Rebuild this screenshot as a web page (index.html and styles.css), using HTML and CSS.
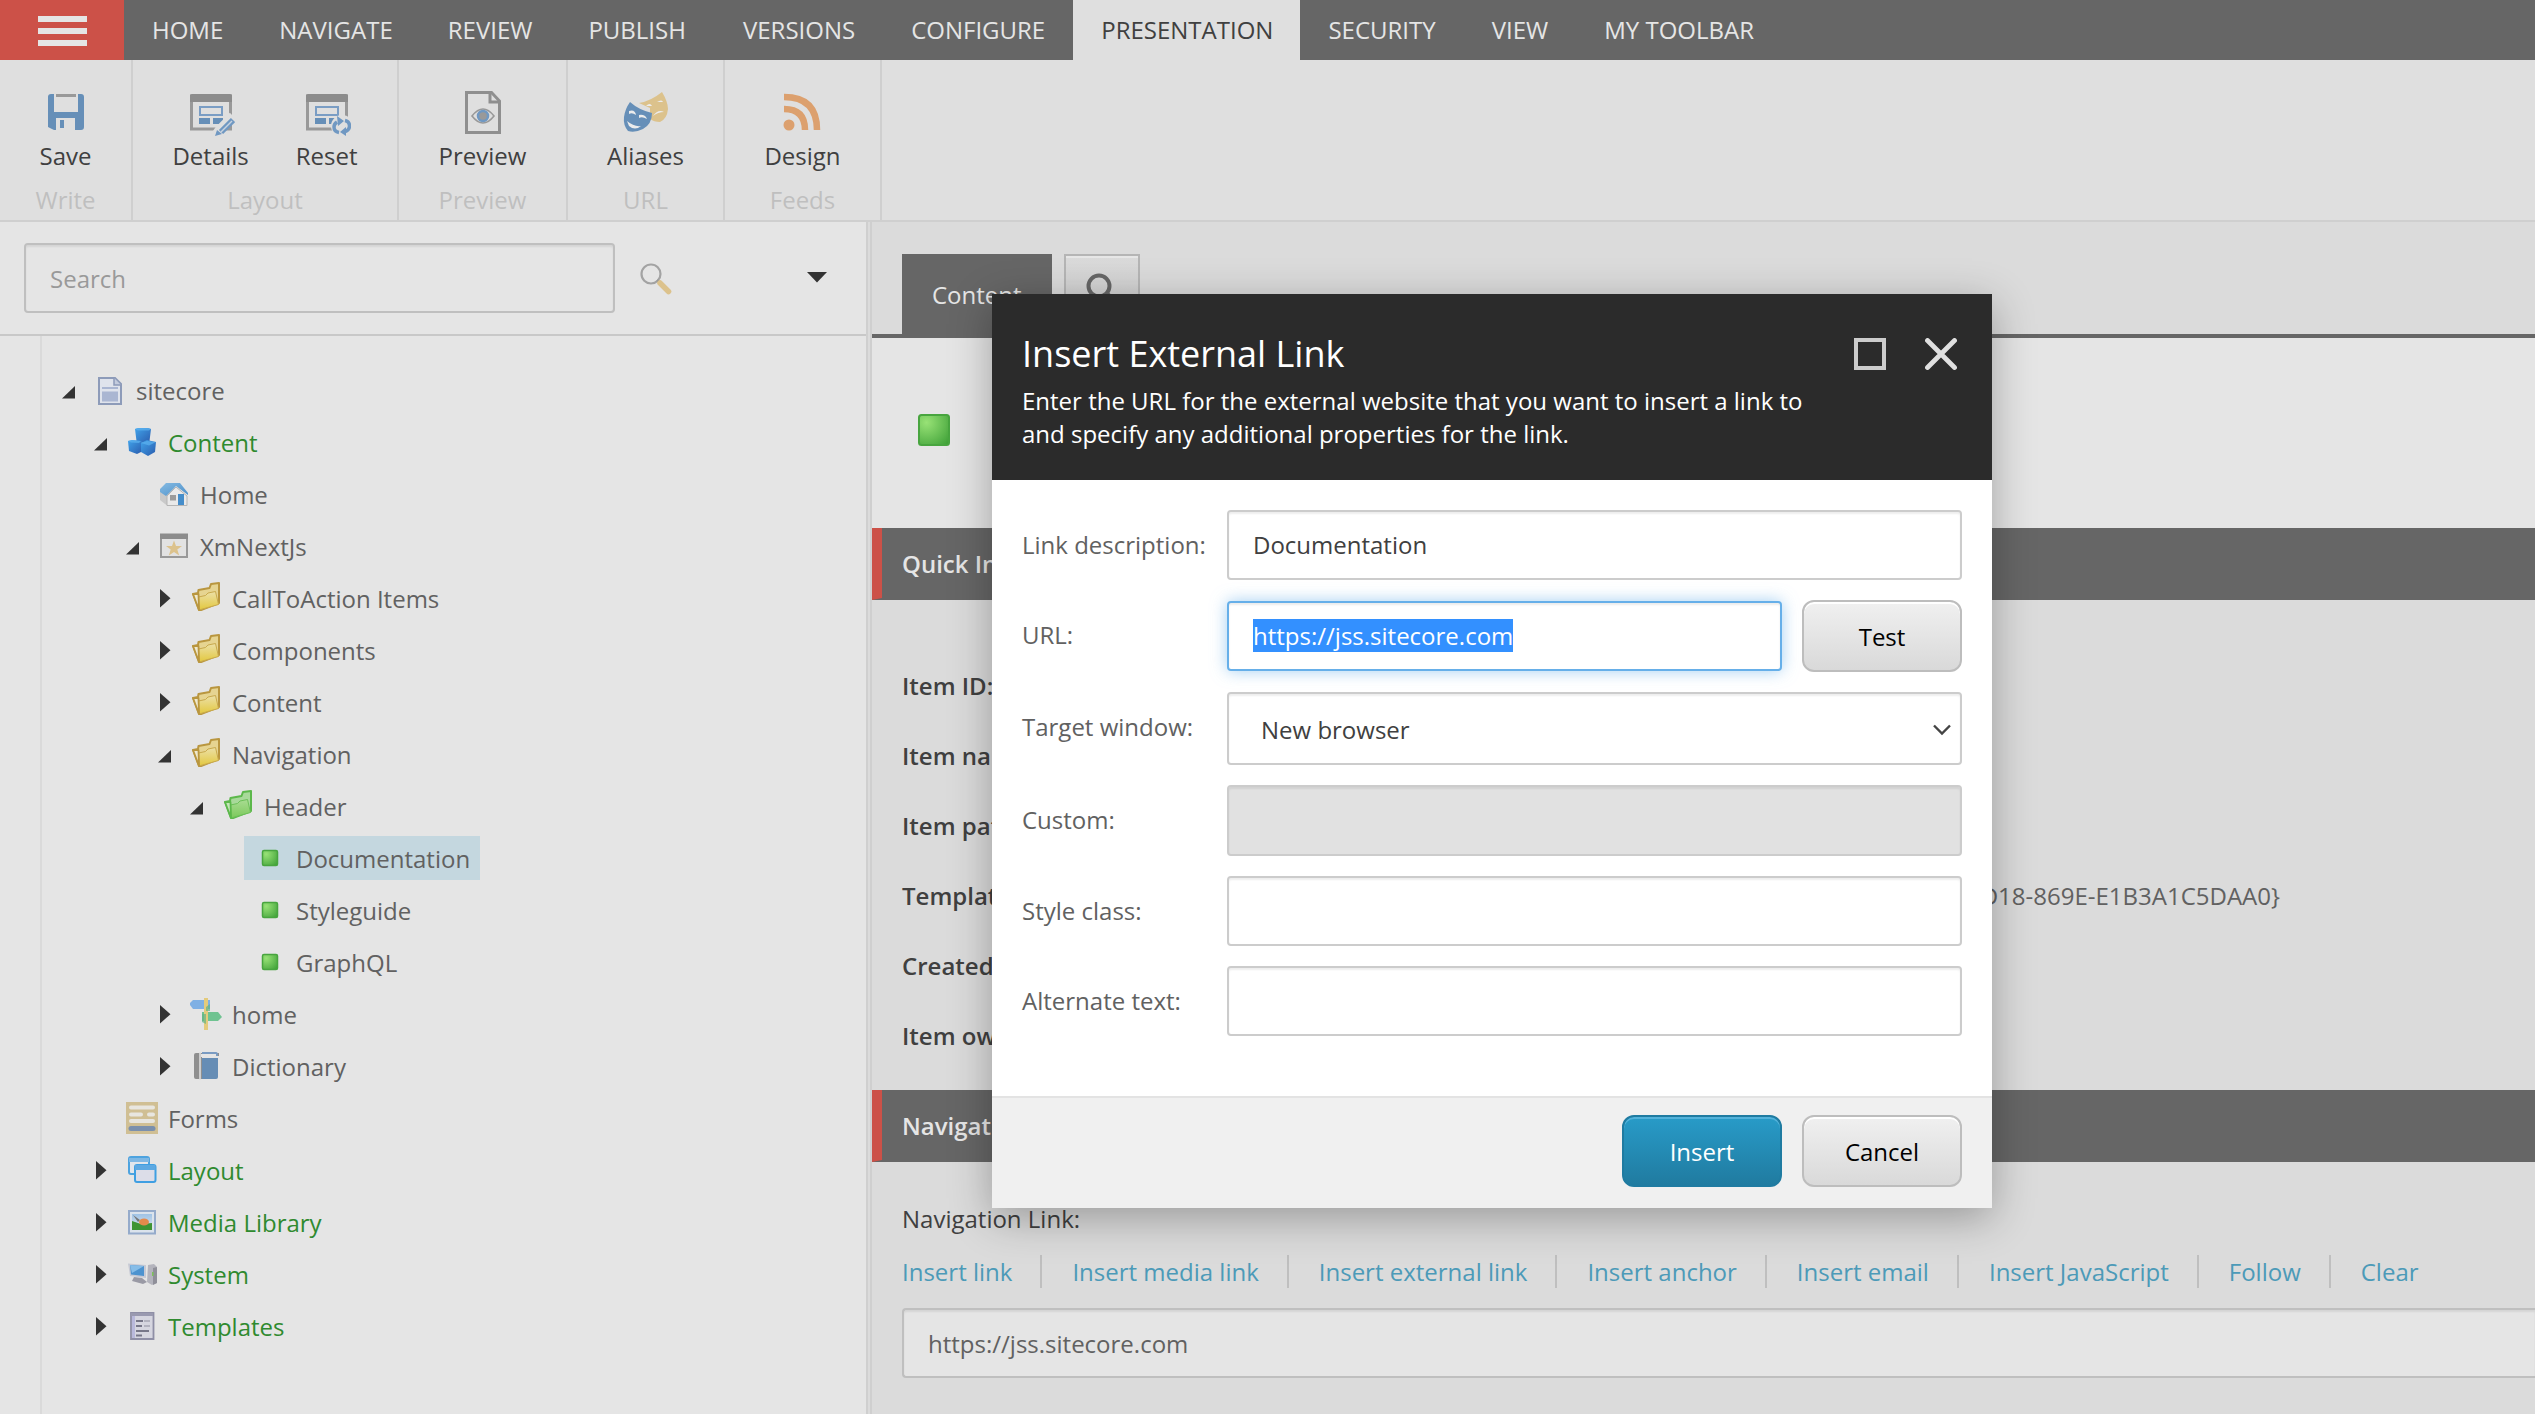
FILE: index.html
```html
<!DOCTYPE html>
<html lang="en">
<head>
<meta charset="utf-8">
<title>Content Editor</title>
<link rel="stylesheet" href="styles.css">
</head>
<body>
<svg class="defs" width="0" height="0" aria-hidden="true">
  <defs>
    <linearGradient id="g-yellow" x1="0" y1="0" x2="0" y2="1"><stop offset="0" stop-color="#ece0a8"/><stop offset="1" stop-color="#e3c83e"/></linearGradient>
    <linearGradient id="g-greenf" x1="0" y1="0" x2="0" y2="1"><stop offset="0" stop-color="#a9dc92"/><stop offset="1" stop-color="#7cc95c"/></linearGradient>
    <radialGradient id="g-green" cx=".25" cy=".25" r="1"><stop offset="0" stop-color="#98e276"/><stop offset="1" stop-color="#3fa138"/></radialGradient>
    <linearGradient id="g-cube" x1="0" y1="0" x2="1" y2="1"><stop offset="0" stop-color="#41a3ea"/><stop offset="1" stop-color="#2a5cae"/></linearGradient>
    <linearGradient id="g-sky" x1="0" y1="0" x2="0" y2="1"><stop offset="0" stop-color="#9fc3e6"/><stop offset="1" stop-color="#dfe7ec"/></linearGradient>
    <linearGradient id="g-roof" x1="0" y1="0" x2="1" y2="1"><stop offset="0" stop-color="#86bbe2"/><stop offset="1" stop-color="#4b8fca"/></linearGradient>
  </defs>
  <symbol id="i-open" viewBox="0 0 32 32"><path d="M13 12v12.5H0z" fill="#333"/></symbol>
  <symbol id="i-closed" viewBox="0 0 32 32"><path d="M2 7l10.5 9.2L2 25.500z" fill="#333"/></symbol>
  <symbol id="i-doc" viewBox="0 0 32 32">
    <path d="M5 4h16l6 6v20H5z" fill="#dfe3ec" stroke="#8d9bb9" stroke-width="2"/>
    <path d="M20 4v7h7" fill="#c3cbdd" stroke="#8d9bb9" stroke-width="1.500"/>
    <path d="M8 13h16v2H8zM8 17.500h16v10H8z" fill="#aab6d2"/>
  </symbol>
  <symbol id="i-cubes" viewBox="0 0 32 32">
    <path d="M9 3l3-1h10l3 1-1.500 12-6 2-7-2z" fill="url(#g-cube)"/>
    <path d="M2 15l4-1 10 1-1 11-4 2-8-3z" fill="url(#g-cube)"/>
    <path d="M15 17l6-3 9 2-1 10-7 4-7-4z" fill="url(#g-cube)"/>
    <path d="M9 3l3-1h10l3 1-2 1.500H12zM2 15l4-1 9 1-2 2-8-.5zM15 17l6-2 9 1-7 3.500z" fill="#5cb2ef" opacity=".7"/>
  </symbol>
  <symbol id="i-house" viewBox="0 0 32 32">
    <path d="M2 14L18 9l11 9v9.500H9L2 22z" fill="#c9c9c9"/>
    <path d="M9 18l9-9 11 9v9.500H9z" fill="#e9e9e9" stroke="#b5b5b5"/>
    <path d="M8 5h14l8 10v2L18 8 8 18l-6-4v-3z" fill="url(#g-roof)"/>
    <path d="M12 17h6v5.500h-6z" fill="#9b9b9b"/><path d="M20 16h6v11h-6z" fill="#458dca"/>
  </symbol>
  <symbol id="i-star" viewBox="0 0 32 32">
    <path d="M3 5h26v22H3z" fill="#e2e2e2" stroke="#999" stroke-width="2"/><path d="M2 3.500h28V9H2z" fill="#8c8c8c"/>
    <path d="M16 10.500l2 5.500h6l-4.700 3.600 1.900 5.900-5.200-3.500-5.200 3.500 1.900-5.900L8 16h6z" fill="#dcc28c"/>
  </symbol>
  <symbol id="i-folder" viewBox="0 0 32 32">
    <path d="M3 12l5-1 .5-3 11-2 1.500-4 8-1v20L11 28l-2 0z" fill="#e6d491" stroke="#b9963f" stroke-width="2" stroke-linejoin="round"/>
    <path d="M9 28l-.5-13 7-1.500 2.500-2.500 7.500-1.500 3 13z" fill="url(#g-yellow)" stroke="#c8a94c" stroke-width="1"/>
    <path d="M3 12l5.500 0L9 28z" fill="#efe9cf" stroke="#b9963f" stroke-width="1.800" stroke-linejoin="round"/>
  </symbol>
  <symbol id="i-folderg" viewBox="0 0 32 32">
    <path d="M3 12l5-1 .5-3 11-2 1.500-4 8-1v20L11 28l-2 0z" fill="#a8d99a" stroke="#5cb84b" stroke-width="2" stroke-linejoin="round"/>
    <path d="M9 28l-.5-13 7-1.500 2.500-2.500 7.500-1.500 3 13z" fill="url(#g-greenf)" stroke="#6cc058" stroke-width="1"/>
    <path d="M3 12l5.500 0L9 28z" fill="#c4e6b8" stroke="#5cb84b" stroke-width="1.800" stroke-linejoin="round"/>
  </symbol>
  <symbol id="i-item" viewBox="0 0 32 32"><rect x="8.500" y="8.500" width="15" height="15" rx="1.500" fill="url(#g-green)" stroke="#48a53f" stroke-width="1.500"/></symbol>
  <symbol id="i-sign" viewBox="0 0 32 32">
    <path d="M3 2h17v9H3L0 7V5z" fill="#7fb0e4"/><path d="M12 14h16l4 5-4 4H12z" fill="#6fc391"/>
    <path d="M14 0h4v32h-4z" fill="#e4cb7c"/><path d="M16 9l4-3v7h-4zM12 16h4v10l-4-2z" fill="#62b484" opacity=".7"/>
  </symbol>
  <symbol id="i-book" viewBox="0 0 32 32">
    <path d="M6 3h23v3H12v23H6q-2 0-2-2V5q0-2 2-2z" fill="#8f8f8f"/><path d="M10 2v28" stroke="#ddd" stroke-width="1.600"/>
    <path d="M12 2h14q2 0 2 3v1H12z" fill="#7a9bc2"/><path d="M11 4h15v3H11z" fill="#e5e5e5"/>
    <path d="M12 8h16v19q0 2-2 2H12z" fill="#668db5"/>
  </symbol>
  <symbol id="i-forms" viewBox="0 0 32 32">
    <path d="M0 0h32v32H0z" fill="#d0bf94"/><path d="M5 5.500h22M5 12.500h10M23 12.500h4M5 19h22" stroke="#e8e6e0" stroke-width="4" stroke-linecap="round"/>
    <path d="M5 26.500h22" stroke="#7b90ad" stroke-width="5" stroke-linecap="round"/>
  </symbol>
  <symbol id="i-windows" viewBox="0 0 32 32">
    <rect x="3" y="3" width="20" height="17" rx="2" fill="#e1e6ec" stroke="#4da3df" stroke-width="2"/><path d="M3 4h20v4H3z" fill="#7fb8e4"/>
    <rect x="9" y="11" width="20.500" height="17" rx="2" fill="#dcdde8" stroke="#3f9fe2" stroke-width="2"/><path d="M9 11h20.500v5H9z" fill="#5da9e2"/>
  </symbol>
  <symbol id="i-picture" viewBox="0 0 32 32">
    <path d="M3 5h26v22.500H3z" fill="#dbe3ec" stroke="#95abcb" stroke-width="2"/><path d="M6 8h20v16H6z" fill="url(#g-sky)"/>
    <path d="M6 15l9 3 11-1v7H6z" fill="#3f9433"/><path d="M7 9l7 5-2 2z" fill="#777"/><ellipse cx="18" cy="16" rx="5" ry="3.500" fill="#e58a4b"/>
  </symbol>
  <symbol id="i-computer" viewBox="0 0 32 32">
    <path d="M22 7l6-1 3 3v16l-5 2-5-3z" fill="#b4b4bd"/><path d="M27 10l4-1v16l-4 2z" fill="#8f8f99"/>
    <path d="M2 5.500l18 1.500v13L4 18z" fill="#c6c9d4"/><path d="M4 7l14 1v10L5 16.500z" fill="#4d93cf"/><path d="M4 7l14 1-12 7z" fill="#86bde8"/>
    <path d="M8 19l8 1 5 4-4 2-11-3z" fill="#9a9aa5"/><path d="M26 14h1.500v4H26z" fill="#7dc25a"/>
  </symbol>
  <symbol id="i-template" viewBox="0 0 32 32">
    <path d="M5 3h22.500v26H5z" fill="#d6d6e0" stroke="#8f8fa6" stroke-width="1.800"/><path d="M5 3h22v3H5z" fill="#9a9ab0"/><path d="M6 6h3v22H6z" fill="#b9b9dc"/>
    <path d="M10 11h7M10 16h6M10 21h13M10 25.500h6" stroke="#777789" stroke-width="1.800"/><path d="M18 11h6M18 16h6" stroke="#a6a6b4" stroke-width="1.500"/>
  </symbol>
</svg>

<nav class="ribbon-tabs">
  <div class="burger"><i></i><i></i><i></i></div>
  <a>HOME</a><a class="snug">NAVIGATE</a><a>REVIEW</a><a class="wide">PUBLISH</a><a>VERSIONS</a><a>CONFIGURE</a><a class="active snug">PRESENTATION</a><a>SECURITY</a><a>VIEW</a><a>MY TOOLBAR</a>
</nav>

<div class="toolbar">
  <section class="group write">
    <div class="buttons">
      <div class="button"><svg viewBox="0 0 48 48">
        <path d="M9 6h3v18h24V6h3q3 0 3 3v30q0 3-3 3h-6V30H14v12H12l-6-3V9q0-3 3-3z" fill="#668fb8"/><path d="M14 6h20v3H14z" fill="#999"/><path d="M18 32h4v8h-4z" fill="#668fb8"/>
      </svg><span>Save</span></div>
    </div><h6>Write</h6>
  </section>
  <section class="group layout">
    <div class="buttons">
      <div class="button"><svg viewBox="0 0 48 48">
        <path d="M4.500 8h39v33h-39z" fill="none" stroke="#999" stroke-width="3"/><path d="M3 8q0-2 2-2h38q2 0 2 2v6H3z" fill="#8c8c8c"/>
        <path d="M13 19h22v8H13z" fill="none" stroke="#7a9dc4" stroke-width="2"/><path d="M12 30h11v6H12zM26 30h10v6H26z" fill="#668fb8"/>
        <path d="M46 28L32 42l-4 6" stroke="#dfdfdf" stroke-width="9"/><path d="M46 32L34 44" stroke="#7098c2" stroke-width="6"/><path d="M45 33L34 44" stroke="#c8d3e0" stroke-width="1.500"/><path d="M28 48l2-6 5 4z" fill="#7098c2"/>
      </svg><span>Details</span></div>
      <div class="button"><svg viewBox="0 0 48 48">
        <path d="M4.500 8h39v33h-39z" fill="none" stroke="#999" stroke-width="3"/><path d="M3 8q0-2 2-2h38q2 0 2 2v6H3z" fill="#8c8c8c"/>
        <path d="M13 19h22v8H13z" fill="none" stroke="#7a9dc4" stroke-width="2"/><path d="M12 30h11v6H12zM26 30h6v6h-6z" fill="#668fb8"/>
        <circle cx="39" cy="38" r="11" fill="#dfdfdf"/>
        <path d="M36 44.500q-5-1-5-5.500 0-3 3-5M42 32.500q4.500 1 4.500 5.500 0 4-5 6" fill="none" stroke="#7098c2" stroke-width="3.500"/>
        <path d="M34 28l7 5-6 5zM43 39v9l-6-4z" fill="#7098c2"/>
      </svg><span>Reset</span></div>
    </div><h6>Layout</h6>
  </section>
  <section class="group preview">
    <div class="buttons">
      <div class="button"><svg viewBox="0 0 48 48">
        <path d="M7.500 4.500h25l8 8.500v31.500h-33z" fill="none" stroke="#8f8f8f" stroke-width="3"/><path d="M31 4v10h10" fill="none" stroke="#8f8f8f" stroke-width="3"/>
        <path d="M13 28q11-14 22 0-11 14-22 0z" fill="none" stroke="#999" stroke-width="1.600"/><circle cx="24" cy="28" r="5" fill="#999" stroke="#7098c2" stroke-width="2.500"/>
      </svg><span>Preview</span></div>
    </div><h6>Preview</h6>
  </section>
  <section class="group">
    <div class="buttons">
      <div class="button"><svg viewBox="0 0 48 48">
        <path d="M18 15q12-2 23-11 6 10 6 17-1 10-8 13-6 0-10-3V20z" fill="#dcc28c"/><path d="M25 18q4-4 6 0zM36 14q5-3 6 0zM32 28q5-7 11-4-6 0-11 4z" fill="#ececec"/>
        <path d="M9 14q9 8 22 11 0 11-9 16-8 4-15 2-5-6-4-14 1-8 6-15z" fill="#668fb8"/><path d="M8 23q6-2 7 4-4-3-7-1zM18 27q6-1 8 4-5-3-8-1zM6 33q7 6 14 5-6 5-12 0z" fill="#ececec"/>
      </svg><span>Aliases</span></div>
    </div><h6>URL</h6>
  </section>
  <section class="group">
    <div class="buttons">
      <div class="button"><svg viewBox="0 0 48 48">
        <circle cx="11" cy="37" r="5.500" fill="#dca06e"/><path d="M6 21q21 0 21 21M6 9q33 0 33 33" fill="none" stroke="#dca06e" stroke-width="6.500"/>
      </svg><span>Design</span></div>
    </div><h6>Feeds</h6>
  </section>
</div>

<main class="workspace">
  <aside class="sidebar">
    <div class="search">
      <div class="field">Search</div>
      <svg class="lens" viewBox="0 0 32 32"><circle cx="11" cy="11" r="9.500" fill="none" stroke="#a3a3a3" stroke-width="2.200"/><path d="M17 17l3 3" stroke="#999" stroke-width="2.500"/><path d="M20 20l8.500 8.500" stroke="#dcc28c" stroke-width="5.500" stroke-linecap="round"/></svg>
      <svg class="caret" viewBox="0 0 20 12"><path d="M0 1h20l-10 10.500z" fill="#333"/></svg>
    </div>
    <div class="tree">
      <div class="row l0"><svg><use href="#i-open"/></svg><span class="node"><svg><use href="#i-doc"/></svg>sitecore</span></div>
      <div class="row l1"><svg><use href="#i-open"/></svg><span class="node green"><svg><use href="#i-cubes"/></svg>Content</span></div>
      <div class="row l2"><svg></svg><span class="node"><svg><use href="#i-house"/></svg>Home</span></div>
      <div class="row l2"><svg><use href="#i-open"/></svg><span class="node"><svg><use href="#i-star"/></svg>XmNextJs</span></div>
      <div class="row l3"><svg><use href="#i-closed"/></svg><span class="node"><svg><use href="#i-folder"/></svg>CallToAction Items</span></div>
      <div class="row l3"><svg><use href="#i-closed"/></svg><span class="node"><svg><use href="#i-folder"/></svg>Components</span></div>
      <div class="row l3"><svg><use href="#i-closed"/></svg><span class="node"><svg><use href="#i-folder"/></svg>Content</span></div>
      <div class="row l3"><svg><use href="#i-open"/></svg><span class="node"><svg><use href="#i-folder"/></svg>Navigation</span></div>
      <div class="row l4"><svg><use href="#i-open"/></svg><span class="node"><svg><use href="#i-folderg"/></svg>Header</span></div>
      <div class="row l5"><svg></svg><span class="node selected"><svg><use href="#i-item"/></svg>Documentation</span></div>
      <div class="row l5"><svg></svg><span class="node"><svg><use href="#i-item"/></svg>Styleguide</span></div>
      <div class="row l5"><svg></svg><span class="node"><svg><use href="#i-item"/></svg>GraphQL</span></div>
      <div class="row l3"><svg><use href="#i-closed"/></svg><span class="node"><svg><use href="#i-sign"/></svg>home</span></div>
      <div class="row l3"><svg><use href="#i-closed"/></svg><span class="node"><svg><use href="#i-book"/></svg>Dictionary</span></div>
      <div class="row l1"><svg></svg><span class="node"><svg><use href="#i-forms"/></svg>Forms</span></div>
      <div class="row l1"><svg><use href="#i-closed"/></svg><span class="node green"><svg><use href="#i-windows"/></svg>Layout</span></div>
      <div class="row l1"><svg><use href="#i-closed"/></svg><span class="node green"><svg><use href="#i-picture"/></svg>Media Library</span></div>
      <div class="row l1"><svg><use href="#i-closed"/></svg><span class="node green"><svg><use href="#i-computer"/></svg>System</span></div>
      <div class="row l1"><svg><use href="#i-closed"/></svg><span class="node green"><svg><use href="#i-template"/></svg>Templates</span></div>
    </div>
  </aside>
  <div class="splitter"></div>
  <section class="editor">
    <div class="tabs">
      <div class="tab">Content</div>
      <div class="tab-search"><svg viewBox="0 0 32 32"><circle cx="13" cy="13" r="10.500" fill="none" stroke="#666" stroke-width="4"/><path d="M20 20l9 9" stroke="#666" stroke-width="5"/></svg></div>
    </div>
    <header class="item-head"><svg viewBox="0 0 32 32"><rect x="1" y="1" width="30" height="30" rx="2.500" fill="url(#g-green)" stroke="#48a53f" stroke-width="2"/></svg></header>
    <h2 class="bar">Quick Info</h2>
    <dl class="info">
      <dt>Item ID:</dt><dd></dd>
      <dt>Item name:</dt><dd></dd>
      <dt>Item path:</dt><dd></dd>
      <dt>Template:</dt><dd>D18-869E-E1B3A1C5DAA0}</dd>
      <dt>Created from:</dt><dd></dd>
      <dt>Item owner:</dt><dd></dd>
    </dl>
    <h2 class="bar">Navigation</h2>
    <div class="field-block">
      <label>Navigation Link:</label>
      <div class="links"><a>Insert link</a><a>Insert media link</a><a>Insert external link</a><a>Insert anchor</a><a>Insert email</a><a>Insert JavaScript</a><a>Follow</a><a>Clear</a></div>
      <div class="field">https://jss.sitecore.com</div>
    </div>
  </section>
</main>

<div class="dialog">
  <header>
    <div class="title">
      <h1>Insert External Link</h1>
      <svg viewBox="0 0 32 32"><path d="M2 2h28v28H2z" fill="none" stroke="#ccc" stroke-width="4"/></svg>
      <svg viewBox="0 0 32 32"><path d="M2.500 2.500l27 27M29.500 2.500l-27 27" stroke="#e0e0e0" stroke-width="4.800" stroke-linecap="round"/></svg>
    </div>
    <p>Enter the URL for the external website that you want to insert a link to<br>and specify any additional properties for the link.</p>
  </header>
  <div class="form">
    <label>Link description:</label><div class="input">Documentation</div>
    <label>URL:</label><div class="pair"><div class="input focus"><mark>https://jss.sitecore.com</mark></div><button class="btn">Test</button></div>
    <label class="up">Target window:</label><div class="input select">New browser<svg viewBox="0 0 18 12"><path d="M1 1.500l8 8 8-8" fill="none" stroke="#444" stroke-width="2.400"/></svg></div>
    <label>Custom:</label><div class="input disabled"></div>
    <label>Style class:</label><div class="input"></div>
    <label>Alternate text:</label><div class="input"></div>
  </div>
  <footer><button class="btn primary">Insert</button><button class="btn">Cancel</button></footer>
</div>
</body>
</html>
```
FILE: styles.css
```css
* { box-sizing: border-box; margin: 0; padding: 0; }
html, body { height: 100%; overflow: hidden; }
body {
  display: flex; flex-direction: column;
  background: #dbdbdb; color: #404040;
  font: 24px/33px "Open Sans", sans-serif;
}
svg { display: block; flex: none; }
.defs { position: absolute; }

/* ribbon */
.ribbon-tabs { display: flex; flex: none; height: 60px; background: #666; color: #e5e5e5; line-height: 60px; }
.ribbon-tabs a { padding: 0 28px; }
.ribbon-tabs .snug { padding-right: 27px; }
.ribbon-tabs .wide { padding-right: 29px; }
.ribbon-tabs .active { background: #dfdfdf; color: #404040; }
.burger { display: flex; flex-direction: column; gap: 6px; width: 124px; padding: 16px 37px 0 38px; background: #cc5148; }
.burger i { height: 6px; background: #e5e5e5; }

.toolbar { display: flex; flex: none; height: 162px; background: #dfdfdf; border-bottom: 2px solid #cfcfcf; }
.group { width: 157px; padding-top: 28px; border-right: 2px solid #cfcfcf; text-align: center; }
.group.write { width: 133px; }
.group.layout { width: 266px; }
.group.preview { width: 169px; }
.buttons { display: flex; gap: 47px; justify-content: center; }
.button { display: flex; flex-direction: column; align-items: center; gap: 3px; }
.button svg { width: 48px; height: 48px; }
.group h6 { margin-top: 11px; font-size: 24px; font-weight: 400; color: #bfbfbf; }

.workspace { display: flex; flex: 1; min-height: 0; }

/* content tree */
.sidebar { display: flex; flex-direction: column; width: 866px; background: #e5e5e5; }
.search { display: flex; flex: none; height: 114px; padding: 21px 39px 0 24px; border-bottom: 2px solid #c8c8c8; }
.field {
  height: 70px; padding: 0 24px; line-height: 67px;
  background: #e5e5e5; border: 2px solid #bfbfbf; border-radius: 4px;
  box-shadow: inset 0 2px 2px rgba(0, 0, 0, .07); color: #616161;
}
.search .field { width: 591px; color: #999; }
.lens { width: 32px; height: 32px; margin: 20px 0 0 25px; }
.caret { width: 20px; height: 12px; margin: 28px 0 0 auto; }
.tree { flex: 1; margin-left: 40px; padding-top: 28px; border-left: 2px solid #dadada; color: #616161; }
.row { display: flex; align-items: center; height: 52px; }
.row svg { width: 32px; height: 32px; }
.node { display: flex; align-items: center; gap: 10px; height: 44px; margin-left: -10px; padding: 2px 10px 0; line-height: 42px; white-space: nowrap; }
.node svg { margin-top: -2px; }
.selected { background: #c4d7df; }
.green { color: #2f8a2f; }
.l0 { padding-left: 20px; }
.l1 { padding-left: 52px; }
.l2 { padding-left: 84px; }
.l3 { padding-left: 116px; }
.l4 { padding-left: 148px; }
.l5 { padding-left: 180px; }

.splitter { width: 6px; background: #dbdbdb; border: solid #cfcfcf; border-width: 0 2px; }

/* item editor */
.editor { flex: 1; min-width: 0; }
.tabs { display: flex; gap: 12px; height: 116px; padding: 32px 0 0 30px; border-bottom: 4px solid #666; }
.tab { width: 150px; padding-left: 30px; background: #666; color: #e5e5e5; line-height: 81px; }
.tab-search { display: flex; justify-content: center; width: 76px; height: 76px; padding-top: 17px; border: 2px solid #b5b5b5; background: linear-gradient(#dbdbdb, #c8c8c8); box-shadow: inset 0 2px #e6e6e6; }
.tab-search svg { width: 32px; height: 32px; }
.item-head { height: 190px; padding: 76px 0 0 46px; background: #e5e5e5; }
.item-head svg { width: 32px; height: 32px; }
.bar { height: 72px; padding-left: 20px; border: solid #666; border-width: 0 0 2px 10px; border-left-color: #cc5148; background: #666; color: #e5e5e5; font-size: 24px; font-weight: 600; line-height: 71px; }
.info { display: grid; grid-template-columns: 240px 1138px; grid-auto-rows: 70px; height: 490px; padding: 50px 0 0 30px; line-height: 71px; }
.info dt { font-weight: 600; white-space: nowrap; }
.info dd { color: #616161; text-align: right; }
.field-block { padding: 40px 0 0 30px; }
.field-block label { display: block; height: 53px; }
.links { display: flex; color: #4c9ab8; }
.links a + a { margin-left: 28px; padding-left: 30px; border-left: 2px solid #bfbfbf; }
.field-block .field { margin-top: 20px; border-right: 0; border-radius: 4px 0 0 4px; }

/* dialog */
.dialog {
  position: absolute; left: 992px; top: 294px; width: 1000px; height: 914px;
  display: flex; flex-direction: column; background: #fff;
  box-shadow: 0 10px 40px rgba(0, 0, 0, .3);
}
.dialog header { height: 186px; padding: 36px 35px 0 30px; background: #2b2b2b; color: #fff; }
.title { display: flex; align-items: flex-start; margin-bottom: 6px; }
.title h1 { margin-right: auto; font-size: 36px; font-weight: 400; line-height: 48px; }
.title svg { width: 32px; height: 32px; margin: 8px 0 0 39px; }
.form { display: grid; grid-template-columns: 205px 1fr; row-gap: 20px; align-content: start; flex: 1; padding: 30px 30px 0; color: #616161; }
.form label { line-height: 70px; }
.form label.up { line-height: 69px; }
.input {
  height: 70px; padding: 0 24px; line-height: 66px; background: #fff; color: #404040;
  border: 2px solid #ccc; border-radius: 4px; box-shadow: inset 0 2px 2px rgba(0, 0, 0, .07);
}
.pair { display: flex; gap: 20px; height: 72px; }
.pair .input { flex: 1; margin-top: 1px; }
.input.focus { border-color: #66afe9; box-shadow: inset 0 2px 2px rgba(0, 0, 0, .075), 0 0 16px rgba(102, 175, 233, .6); }
mark { background: #3390ff; color: #fff; }
.select { display: flex; align-items: center; justify-content: space-between; height: 73px; padding: 2px 9px 0 32px; }
.select svg { width: 18px; height: 12px; }
.input.disabled { height: 71px; background: #e1e1e1; }
.dialog footer { display: flex; gap: 20px; justify-content: flex-end; height: 112px; padding: 17px 30px 0; border-top: 2px solid #e3e3e3; background: #f0f0f0; }
.btn {
  width: 160px; height: 72px; border: 2px solid #bdbdbd; border-radius: 12px;
  background: linear-gradient(#f0f0f0, #d9d9d9); box-shadow: inset 0 2px #fff;
  color: #000; font: inherit;
}
.btn.primary { border-color: #1f7ba1; background: linear-gradient(#289bc8, #207ba0); box-shadow: inset 0 2px #53b2da; color: #fff; }
```
